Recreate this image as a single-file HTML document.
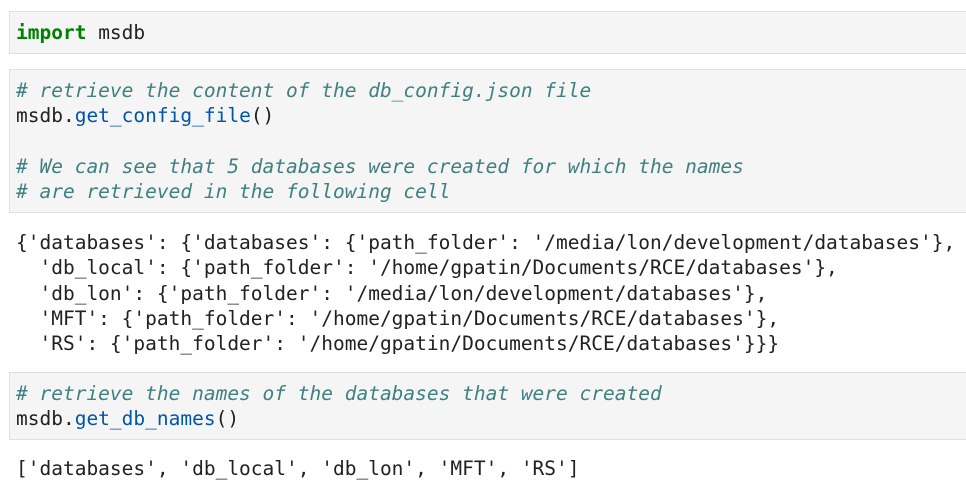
<!DOCTYPE html>
<html><head><meta charset="utf-8"><style>
body{margin:0;background:#fff;width:966px;height:487px;overflow:hidden;position:relative}
.b{position:absolute;left:9px;width:960px;background:#f5f5f5;border:1px solid #e0e0e0;box-sizing:border-box}
pre{position:absolute;left:16px;margin:0;font-family:"DejaVu Sans Mono","Liberation Mono",monospace;font-size:19.5px;line-height:25.3px;color:#212121;white-space:pre}
.k{color:#008000;font-weight:bold}.c{color:#408080;font-style:italic}.f{color:#0055aa}
</style></head><body>
<div class="b" style="top:11px;height:43px"></div>
<div class="b" style="top:69px;height:144px"></div>
<div class="b" style="top:372px;height:68px"></div>
<pre style="top:20px"><span class="k">import</span> msdb</pre>
<pre style="top:78px"><span class="c"># retrieve the content of the db_config.json file</span>
msdb.<span class="f">get_config_file</span>()

<span class="c"># We can see that 5 databases were created for which the names</span>
<span class="c"># are retrieved in the following cell</span></pre>
<pre style="top:230px">{'databases': {'databases': {'path_folder': '/media/lon/development/databases'},
  'db_local': {'path_folder': '/home/gpatin/Documents/RCE/databases'},
  'db_lon': {'path_folder': '/media/lon/development/databases'},
  'MFT': {'path_folder': '/home/gpatin/Documents/RCE/databases'},
  'RS': {'path_folder': '/home/gpatin/Documents/RCE/databases'}}}</pre>
<pre style="top:381px"><span class="c"># retrieve the names of the databases that were created</span>
msdb.<span class="f">get_db_names</span>()</pre>
<pre style="top:456px">['databases', 'db_local', 'db_lon', 'MFT', 'RS']</pre>
</body></html>
